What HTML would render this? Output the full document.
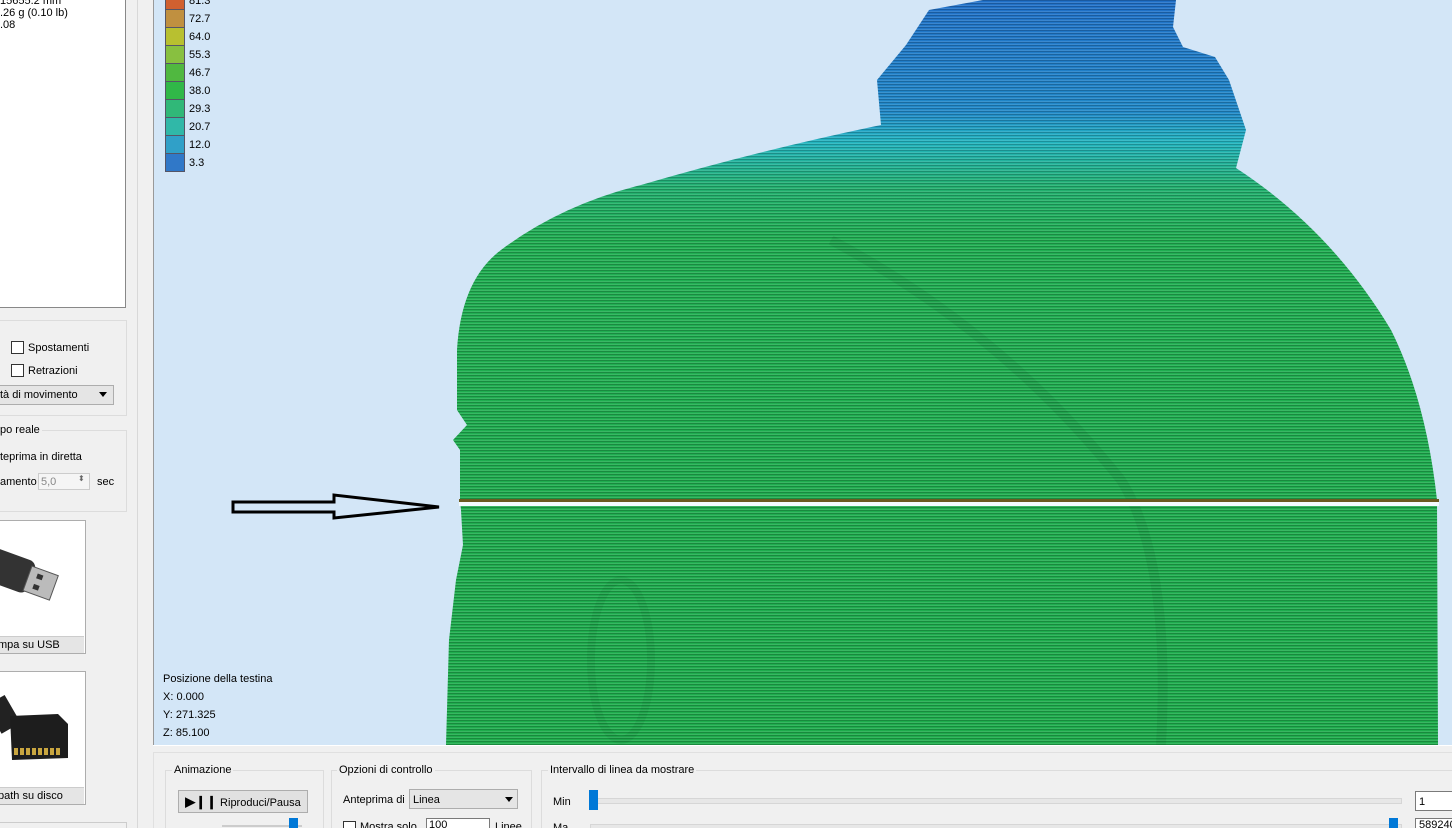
<!DOCTYPE html>
<html style="margin:0;width:1452px;height:828px;overflow:hidden"><head><meta charset="utf-8"><style>
body{margin:0;width:1452px;height:828px;overflow:hidden;background:#f0f0f0;font-family:"Liberation Sans",sans-serif;font-size:11px;color:#000;position:relative}
.a{position:absolute}
.grp{position:absolute;border:1px solid #dcdcdc}
.gt{position:absolute;background:#f0f0f0;padding:0 2px;font-size:11px}
.cb{position:absolute;width:11px;height:11px;border:1px solid #333;background:#fff}
.btn{position:absolute;background:#e1e1e1;border:1px solid #adadad}
</style></head><body>
<div class="a" style="left:0;top:0;width:125px;height:307px;background:#fff;border-right:1px solid #888;border-bottom:1px solid #888"></div>
<div class="a" style="left:0;top:-5px;line-height:12px;font-size:11px">15655.2 mm<br>.26 g (0.10 lb)<br>.08</div>
<div class="grp" style="left:-2px;top:320px;width:127px;height:94px"></div>
<div class="cb" style="left:11px;top:341px"></div><div class="a" style="left:28px;top:342px">Spostamenti</div>
<div class="cb" style="left:11px;top:364px"></div><div class="a" style="left:28px;top:365px">Retrazioni</div>
<div class="a" style="left:-2px;top:385px;width:114px;height:18px;background:#e5e5e5;border:1px solid #adadad"></div>
<div class="a" style="left:0;top:389px">tà di movimento</div>
<div class="a" style="left:99px;top:392px;width:0;height:0;border-left:4px solid transparent;border-right:4px solid transparent;border-top:5px solid #000"></div>
<div class="grp" style="left:-2px;top:430px;width:127px;height:80px"></div>
<div class="gt" style="left:-2px;top:424px">po reale</div>
<div class="a" style="left:0;top:451px">teprima in diretta</div>
<div class="a" style="left:0;top:476px">amento</div>
<div class="a" style="left:38px;top:473px;width:52px;height:17px;border:1px solid #ccc;background:#f5f5f5;color:#888;line-height:17px;padding-left:2px;box-sizing:border-box">5,0</div>
<div class="a" style="left:78px;top:474px;font-size:8px;color:#666">⬍</div>
<div class="a" style="left:97px;top:476px">sec</div>
<div class="a" style="left:-2px;top:520px;width:86px;height:132px;border:1px solid #adadad;background:#fff"></div>
<svg class="a" style="left:0;top:530px" width="84" height="105"><g transform="rotate(20 40 55)"><rect x="-30" y="35" width="60" height="34" rx="8" fill="#333"/><rect x="26" y="40" width="28" height="26" fill="#bbb" stroke="#555"/><rect x="34" y="45" width="6" height="5" fill="#333"/><rect x="34" y="56" width="6" height="5" fill="#333"/></g></svg>
<div class="a" style="left:-2px;top:636px;width:86px;height:16px;background:#e5e5e5;border-top:1px solid #ccc;line-height:16px">mpa su USB</div>
<div class="a" style="left:-2px;top:671px;width:86px;height:132px;border:1px solid #adadad;background:#fff"></div>
<svg class="a" style="left:0;top:690px" width="84" height="90"><rect x="-8" y="10" width="22" height="32" fill="#222" transform="rotate(-30 0 25)"/><path d="M10 26 L58 24 L68 34 L68 68 L12 70 Z" fill="#1d1d1d"/><g fill="#c9a640"><rect x="14" y="58" width="4" height="7"/><rect x="20" y="58" width="4" height="7"/><rect x="26" y="58" width="4" height="7"/><rect x="32" y="58" width="4" height="7"/><rect x="38" y="58" width="4" height="7"/><rect x="44" y="58" width="4" height="7"/><rect x="50" y="58" width="4" height="7"/><rect x="56" y="58" width="4" height="7"/></g></svg>
<div class="a" style="left:-2px;top:787px;width:86px;height:16px;background:#e5e5e5;border-top:1px solid #ccc;line-height:16px">path su disco</div>
<div class="a" style="left:-2px;top:822px;width:127px;height:10px;border:1px solid #ccc"></div>
<div class="a" style="left:137px;top:0;width:1px;height:828px;background:#d8d8d8"></div>
<div class="a" style="left:153px;top:0;width:1299px;height:745px;background:#d3e6f7;border-left:1px solid #999;overflow:hidden">
<svg class="a" style="left:-153px;top:0" width="1452" height="745">
<defs>
<linearGradient id="g" x1="0" y1="0" x2="0" y2="745" gradientUnits="userSpaceOnUse">
<stop offset="0" stop-color="#2070c8"/><stop offset="0.15" stop-color="#2088c8"/><stop offset="0.19" stop-color="#22b4c0"/><stop offset="0.25" stop-color="#22b070"/><stop offset="0.32" stop-color="#20ae52"/><stop offset="1" stop-color="#1eac4c"/></linearGradient>
<pattern id="s" width="4" height="3" patternUnits="userSpaceOnUse"><rect width="4" height="1" fill="#000" opacity="0.2"/><rect y="2" width="4" height="1" fill="#fff" opacity="0.12"/></pattern>
<path id="b" d="M459,500 L459,450 L452,440 L466,425 L456,410 L456,350 Q460,280 500,250 Q560,205 640,185 Q760,150 880,125 L876,80 L905,45 L928,10 L982,0 L1175,0 L1172,27 L1182,47 L1214,57 L1228,80 L1245,130 L1235,168 Q1330,230 1390,330 Q1425,400 1436,500 L1437,745 L445,745 L448,640 L455,580 L462,545 L460,510 Z"/>
</defs>
<use href="#b" fill="url(#g)"/>
<use href="#b" fill="url(#s)"/>
<path d="M830,240 Q1000,330 1120,480 Q1170,560 1160,745" stroke="#000" stroke-opacity="0.06" stroke-width="10" fill="none"/>
<ellipse cx="620" cy="660" rx="30" ry="80" fill="none" stroke="#000" stroke-opacity="0.05" stroke-width="8"/>
<rect x="458" y="499" width="980" height="3" fill="#6a5a20"/>
<rect x="458" y="502" width="980" height="4" fill="#f4fbff"/>
<path d="M232,502 L333,502 L333,495 L438,507 L333,518 L333,512 L232,512 Z" fill="#d3e6f7" stroke="#000" stroke-width="3"/>
</svg>
<div class="a" style="left:11px;top:-10px;width:20px">
<div style="height:18px;background:#d06030;border:1px solid #556"></div><div style="height:17px;background:#c09040;border:1px solid #556;border-top:0"></div><div style="height:17px;background:#b8c030;border:1px solid #556;border-top:0"></div><div style="height:17px;background:#88c040;border:1px solid #556;border-top:0"></div><div style="height:17px;background:#50b840;border:1px solid #556;border-top:0"></div><div style="height:17px;background:#30b848;border:1px solid #556;border-top:0"></div><div style="height:17px;background:#30b878;border:1px solid #556;border-top:0"></div><div style="height:17px;background:#30b8a8;border:1px solid #556;border-top:0"></div><div style="height:17px;background:#30a0c8;border:1px solid #556;border-top:0"></div><div style="height:17px;background:#3078c8;border:1px solid #556;border-top:0"></div>
</div>
<div class="a" style="left:35px;top:-8px;line-height:18px">81.3<br>72.7<br>64.0<br>55.3<br>46.7<br>38.0<br>29.3<br>20.7<br>12.0<br>3.3</div>
<div class="a" style="left:9px;top:670px;line-height:18px">Posizione della testina<br>X: 0.000<br>Y: 271.325<br>Z: 85.100</div>
</div>
<div class="a" style="left:153px;top:745px;width:1299px;height:83px;overflow:hidden">
<div class="a" style="left:0;top:0;width:1299px;height:1px;background:#fff"></div>
<div class="a" style="left:0;top:7px;width:1310px;height:90px;border:1px solid #e0e0e0"></div>
<div class="grp" style="left:12px;top:25px;width:157px;height:70px"></div><div class="gt" style="left:19px;top:19px">Animazione</div>
<div class="btn" style="left:25px;top:45px;width:128px;height:21px;line-height:21px;text-align:center"><b style="font-size:13px">▶❙❙</b> Riproduci/Pausa</div>
<div class="a" style="left:69px;top:80px;width:80px;height:2px;background:#ccc"></div><div class="a" style="left:136px;top:73px;width:9px;height:12px;background:#0078d7"></div>
<div class="grp" style="left:178px;top:25px;width:199px;height:70px"></div><div class="gt" style="left:184px;top:19px">Opzioni di controllo</div>
<div class="a" style="left:190px;top:49px">Anteprima di</div>
<div class="a" style="left:256px;top:44px;width:109px;height:20px;background:#e5e5e5;border:1px solid #adadad;line-height:20px;padding-left:3px;box-sizing:border-box">Linea</div>
<div class="a" style="left:352px;top:52px;border-left:4px solid transparent;border-right:4px solid transparent;border-top:5px solid #000"></div>
<div class="cb" style="left:190px;top:76px"></div><div class="a" style="left:207px;top:76px">Mostra solo</div>
<div class="a" style="left:273px;top:73px;width:60px;height:16px;border:1px solid #7a7a7a;background:#fff;padding-left:2px">100</div>
<div class="a" style="left:342px;top:76px">Linee</div>
<div class="grp" style="left:388px;top:25px;width:920px;height:70px"></div><div class="gt" style="left:395px;top:19px">Intervallo di linea da mostrare</div>
<div class="a" style="left:400px;top:51px">Min</div>
<div class="a" style="left:437px;top:53px;width:810px;height:4px;background:#e7e7e7;border:1px solid #d6d6d6"></div>
<div class="a" style="left:436px;top:45px;width:9px;height:20px;background:#0078d7"></div>
<div class="a" style="left:400px;top:77px">Ma</div>
<div class="a" style="left:437px;top:79px;width:810px;height:4px;background:#e7e7e7;border:1px solid #d6d6d6"></div>
<div class="a" style="left:1236px;top:73px;width:9px;height:12px;background:#0078d7"></div>
<div class="a" style="left:1262px;top:46px;width:40px;height:20px;border:1px solid #7a7a7a;background:#fff;line-height:20px;padding-left:3px;box-sizing:border-box">1</div>
<div class="a" style="left:1262px;top:73px;width:40px;height:20px;border:1px solid #7a7a7a;background:#fff;padding-left:3px;box-sizing:border-box">589240</div>
</div>
</body></html>
